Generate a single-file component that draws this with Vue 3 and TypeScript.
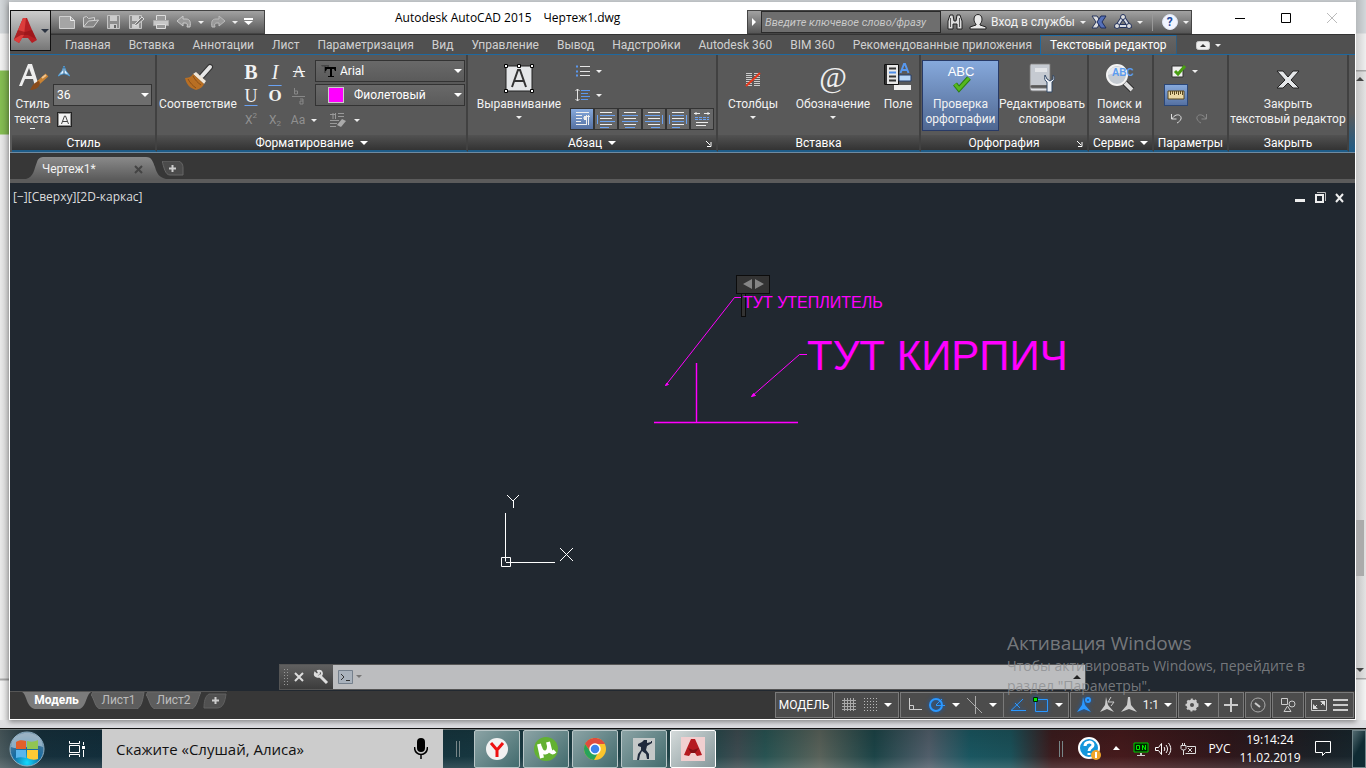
<script setup lang="ts">
import { ref } from 'vue'

const ribbonTabs: string[] = [
  'Главная', 'Вставка', 'Аннотации', 'Лист', 'Параметризация', 'Вид', 'Управление',
  'Вывод', 'Надстройки', 'Autodesk 360', 'BIM 360', 'Рекомендованные приложения', 'Текстовый редактор',
]
const activeTab = ref('Текстовый редактор')

interface ParagraphButton { label: string; white: string; blue: string }
const paragraphButtons: ParagraphButton[] = [
  { label: 'По умолчанию', white: 'M5 3.500h13M5 6.500h6M5 9.500h6M5 12.500h5M5 15.500h11M15.500 6v10M17.500 6v10M13 7.500h6M12.500 8.500h3M12.500 9.500h3M13 10.500h2', blue: '' },
  { label: 'По левому краю', white: 'M5 3.500h12M5 9.500h12M5 15.500h12', blue: 'M2.500 6v9M5 6.500h15M5 12.500h15M5 18.500h9' },
  { label: 'По центру', white: 'M5 3.500h12M5 9.500h12M5 15.500h12', blue: 'M3 6.500h16M3 12.500h16M6 18.500h10' },
  { label: 'По правому краю', white: 'M5 3.500h12M5 9.500h12M5 15.500h12', blue: 'M19.500 6v9M2 6.500h15M2 12.500h15M8 18.500h9' },
  { label: 'По ширине', white: 'M5 3.500h12M5 9.500h12M5 15.500h12', blue: 'M2.500 6v9M19.500 6v9M5 6.500h12M5 12.500h12M5 18.500h8' },
  { label: 'Распределить', white: 'M3 4.500h6M13 4.500h6M5 3v3M17 3v3M5 13.500h12M5 16.500h10', blue: 'M4 8.500h3M8 8.500h3M12 8.500h3M16 8.500h2M4 10.500h3M8 10.500h3M12 10.500h3M16 10.500h2' },
]

const textHeight = ref('36')
const font = ref('Arial')
const color = ref('Фиолетовый')
const command = ref('')
</script>

<template>
  <div class="screen">
    <div class="desk">
      <div class="strip left"></div>
      <main class="window">
        <header class="titlebar">
          <div class="qat">
            <button aria-label="Создать"><svg width="18" height="16"><path d="M1.500 2.500h11l4 4v8h-15z" fill="#a5a5a5" stroke="#d0d0d0" /><path d="M12.500 2.500v4h4" fill="none" stroke="#eee" /></svg></button>
            <button aria-label="Открыть"><svg width="18" height="16"><path d="M1.500 13V3.500l3-1 2 2 6-1v3M1.500 13l5-6 10-1-5 7z" fill="#888" stroke="#d0d0d0" /></svg></button>
            <button aria-label="Сохранить"><svg width="16" height="16"><path d="M1.500 1.500h12v13h-12z" fill="#8d8d8d" stroke="#c4c4c4" /><path d="M4 2h7v5H4zM4 10h7v4H4z" fill="#ccc" /><path d="M8 11h2v3H8z" fill="#666" /></svg></button>
            <button aria-label="Сохранить как"><svg width="18" height="16"><path d="M1.500 1.500h12v13h-12z" fill="#8d8d8d" stroke="#c4c4c4" /><path d="M4 2h7v5H4zM4 10h7v4H4z" fill="#ccc" /><path d="m7 10 7-7 2 2-7 6-3 1z" fill="#777" stroke="#ddd" /></svg></button>
            <button aria-label="Печать"><svg width="18" height="16"><path d="M4.500 1.500h9v5h-9z" fill="#999" stroke="#ddd" /><path d="M1.500 6.500h15v5h-15z" fill="#c8c8c8" stroke="#aaa" /><path d="M4.500 10.500h9v4h-9z" fill="#999" stroke="#ddd" /></svg></button>
            <button aria-label="Отменить"><svg width="16" height="16"><path d="m1 7 6-5v3h3c4 0 5 3 4 8h-3c1-3 0-4-2-4H7v3z" fill="#999" stroke="#c9c9c9" /></svg></button>
            <span class="tri"></span>
            <button aria-label="Вернуть"><svg width="16" height="16"><path d="m15 7-6-5v3H6C2 5 1 8 2 13h3c-1-3 0-4 2-4h2v3z" fill="#999" stroke="#bbb" /></svg></button>
            <span class="tri"></span>
            <button aria-label="Настройка панели"><svg width="10" height="8"><path d="M0 0h9v2H0zM0 3h9L4.500 7z" fill="#fff" /></svg></button>
          </div>
          <h1>Autodesk AutoCAD 2015<span>Чертеж1.dwg</span></h1>
          <div class="info">
            <button class="fold" aria-label="Свернуть"><svg width="5" height="8"><path d="m0 0 4 4-4 4z" fill="#fff" /></svg></button>
            <input type="text" aria-label="Поиск" placeholder="Введите ключевое слово/фразу" />
            <button aria-label="Найти"><svg width="18" height="18"><path d="M2 8 4 2h3l1 6h2l1-6h3l2 6v8h-5v-5H7v5H2z" fill="#ddd" stroke="#222" /><path d="M4.500 5v9M13.500 5v9" stroke="#555" /></svg></button>
            <button class="login"><svg width="18" height="18"><path d="M5 6c0-6 8-6 8 0 0 3-1 4-2 5v1l6 2v2H1v-2l6-2v-1C6 10 5 9 5 6z" fill="#e8e8e8" stroke="#222" /></svg>Вход в службы</button>
            <span class="tri"></span>
            <button aria-label="Exchange"><svg width="16" height="14"><path d="M1 1h5l2 3v6l-2 3H1l4-6z" fill="#ddd" stroke="#28365e" /><path d="M15 1h-5L6 7l4 6h5l-4-6z" fill="#5570b8" stroke="#1e2c5c" /></svg></button>
            <button class="net" aria-label="A360"><svg width="18" height="16"><path d="M9 3 3 12h12z" fill="none" stroke="#26345d" stroke-width="4" /><path d="M9 3 3 12h12z" fill="none" stroke="#d8dce6" stroke-width="2" /><circle cx="9" cy="3" r="2.500" fill="#ddd" stroke="#26345d" /><circle cx="3" cy="12" r="2.500" fill="#ddd" stroke="#26345d" /><circle cx="15" cy="12" r="2.500" fill="#ddd" stroke="#26345d" /></svg></button>
            <span class="tri"></span>
            <i class="bar"></i>
            <button class="help" aria-label="Справка"><b>?</b></button>
            <span class="tri"></span>
          </div>
          <div class="winctl">
            <button aria-label="Свернуть окно"><svg width="12" height="12"><path d="M1 6.500h10" stroke="#000" /></svg></button>
            <button aria-label="Развернуть окно"><svg width="12" height="12"><path d="M1.500 1.500h9v9h-9z" fill="none" stroke="#000" /></svg></button>
            <button aria-label="Закрыть окно"><svg width="12" height="12"><path d="m1 1 10 10M11 1 1 11" stroke="#bbb" /></svg></button>
          </div>
          <button class="appbtn" aria-label="Меню приложения">
            <svg width="26" height="28" viewBox="0 0 26 28"><path d="M11 1h4l5 12 5 10-5 3-4-5h-6l-3 5-5-3 4-10z" fill="#b51f24" /><path d="m11 1-5 12-4 10 5 3 5-8 2-17z" fill="#dc3d3b" /><path d="m6 13 7 2 7-2 4 9-8-4H9l-7 4z" fill="#941418" opacity=".7" /></svg>
            <span class="tri"></span>
          </button>
        </header>

        <nav class="tabs" role="tablist">
          <button v-for="t in ribbonTabs" :key="t" role="tab" :aria-selected="t === activeTab" :class="{ on: t === activeTab }" @click="activeTab = t">{{ t }}</button>
          <div class="ribbonmode"><svg width="14" height="9"><rect x=".5" y=".5" width="13" height="8" rx="2" fill="#eee" stroke="#ccc" /><path d="m4 6 3-3 3 3z" fill="#333" /></svg><span class="tri"></span></div>
        </nav>

        <section class="ribbon">
          <div class="panel p-style">
            <div class="body">
              <button class="big">
                <svg width="32" height="32" viewBox="0 0 32 32"><path fill="#eee" fill-rule="evenodd" d="M2 24 11 2h4l7 22h-4l-2-7H8l-3 7zM9 14h6l-3-8z" /><path d="m30 13-9 8" stroke="#c98232" stroke-width="4" /><path d="m29 13-4 3" stroke="#f1c48e" stroke-width="2" /><path d="M22 19c3 4-2 9-9 9 2-2 2-7 9-9z" fill="#8a4b1b" /></svg>
                <span>Стиль<br />текста</span><i class="dash"></i>
              </button>
              <div class="col">
                <button class="mini" aria-label="Аннотативный"><svg width="12" height="12"><path d="m6 1 2 5 4 5-4-2H4l-4 2 4-5z" fill="#e8f4ff" stroke="#4d9ad4" /><path d="M6 2v8" stroke="#225b88" /></svg></button>
                <div class="combo size"><input v-model="textHeight" type="text" aria-label="Высота текста" /><span class="tri big-t"></span></div>
                <button class="mask" aria-label="Маска фона"><svg width="13" height="13"><path d="M0 0h13v13H0z" fill="#f3f3f3" /><path d="M.5.5h12v12H.5z" fill="none" stroke="#333" stroke-dasharray="1 1" /><path d="m3.500 11 3-8h1l3 8M5 8.500h4" fill="none" stroke="#444" /></svg></button>
              </div>
            </div>
            <h2>Стиль</h2>
          </div>

          <div class="panel p-format">
            <div class="body">
              <button class="big">
                <svg width="32" height="32" viewBox="0 0 32 32"><path d="m28 5-8 9" stroke="#333" stroke-width="6" stroke-linecap="round" /><path d="m28 5-8 9" stroke="#e6e6e6" stroke-width="4" stroke-linecap="round" /><path d="m14 10 10 9-2 3L11 12z" fill="#f1e7d8" /><path d="M11 12c-2 3-5 4-8 4 1 5 4 10 11 12 4-1 7-3 8-6z" fill="#b86f24" /><path d="M6 17c2 4 5 7 8 9M11 14c2 4 5 7 8 9" stroke="#8a4f17" fill="none" /></svg>
                <span>Соответствие</span>
              </button>
              <div class="glyphs">
                <button class="serif"><b>B</b></button><button class="serif"><em>I</em></button><button class="serif strike">A</button>
                <button class="serif under">U</button><button class="serif over"><b>O</b></button><button class="dim serif" aria-label="Дробь"><svg width="16" height="18"><path d="M1 9.500h13" stroke="#888" /><path d="M3.500 1v6h3V4h-3M9 12h3v5H9v-3h3" fill="none" stroke="#888" /></svg></button>
                <button class="dim">X<sup>2</sup></button><button class="dim">X<sub>2</sub></button><button class="dim">Aa<span class="tri"></span></button>
              </div>
              <div class="col wide">
                <div class="combo"><svg class="ci" width="16" height="14"><path d="M0 1h8v3H7L6 2.500H5V9H3V2.500H1z" fill="#333" opacity=".6" /><path d="M4 3h11v4h-1l-1-2h-2v7h2v1H7v-1h2V5H6L5 7H4z" fill="#000" /></svg>
                  <select v-model="font" aria-label="Шрифт"><option>Arial</option></select><span class="tri big-t"></span></div>
                <div class="combo"><i class="swatch"></i><select v-model="color" class="colorsel" aria-label="Цвет"><option>Фиолетовый</option></select><span class="tri big-t"></span></div>
                <button class="eraser" aria-label="Удалить форматирование"><svg width="18" height="16"><path d="M4 1v6M6.500 1v6M1 2.500h6M9 1.500h6M9 4.500h6M1 8.500h9M1 11.500h7M1 14.500h6" stroke="#999" /><path d="m8 13 5-6 4 2-5 6z" fill="#aaa" /></svg><span class="tri"></span></button>
              </div>
            </div>
            <h2>Форматирование<span class="tri big-t"></span></h2>
          </div>

          <div class="panel p-para">
            <div class="body">
              <button class="big">
                <svg width="32" height="32" viewBox="0 0 32 32"><path d="M3 4h26v25H3z" fill="#e4e6e8" /><path d="M3 4h26v25H3z" fill="none" stroke="#222" /><path d="m9 25 6-17h2l6 17M11 19h10" fill="none" stroke="#333" stroke-width="2" /><g fill="#fff" stroke="#000"><path d="M1.500 2.500h3v3h-3zM14.500 2.500h3v3h-3zM27.500 2.500h3v3h-3zM1.500 27.500h3v3h-3zM27.500 27.500h3v3h-3z" /></g></svg>
                <span>Выравнивание</span><span class="tri"></span>
              </button>
              <div class="col">
                <button class="listbtn" aria-label="Маркеры и нумерация"><svg width="16" height="14"><path d="M5 2.500h10M5 7.500h10M5 11.500h10" stroke="#e5e5e5" /><path d="M1 1.500h2v2H1zM1 6.500h2v2H1zM1 10.500h2v2H1z" fill="#5b97ee" /></svg><span class="tri"></span></button>
                <button class="listbtn" aria-label="Межстрочный интервал"><svg width="16" height="14"><path d="M2.500 1v12M.5 3l2-2 2 2M.5 11l2 2 2-2" fill="none" stroke="#e5e5e5" /><path d="M6 2.500h9M6 5.500h7M6 8.500h9M6 11.500h7" stroke="#5b97ee" /></svg><span class="tri"></span></button>
                <div class="seg">
                  <button v-for="(b, i) in paragraphButtons" :key="b.label" :class="{ on: i === 0 }" :aria-label="b.label"><svg width="22" height="20"><path :d="b.white" stroke="#eee" /><path :d="b.blue" stroke="#6aa2f2" /></svg></button>
                </div>
              </div>
            </div>
            <h2>Абзац<span class="tri big-t"></span><svg class="launch" width="6" height="6"><path d="m0 0 4 4M5 1v4.500H1" fill="none" stroke="#fff" /></svg></h2>
          </div>

          <div class="panel p-insert">
            <div class="body">
              <button class="big w70"><svg width="32" height="32" viewBox="0 0 32 32"><path d="M9 11.500h6M9 13.500h6M9 15.500h6M9 17.500h6M9 19.500h6M9 21.500h6M9 23.500h6M17 11.500h6M17 13.500h6M17 15.500h6M17 17.500h6M17 19.500h6M17 21.500h6M17 23.500h6" stroke="#ccc" /><path d="m9 24 14-13" stroke="#e8381c" stroke-width="2" /></svg><span>Столбцы</span><span class="tri"></span></button>
              <button class="big w90"><i class="at">@</i><span>Обозначение</span><span class="tri"></span></button>
              <button class="big w40"><svg width="32" height="32" viewBox="0 0 32 32"><path d="M2.500 2.500h14v20h-14z" fill="#e8e8e8" stroke="#111" /><path d="M4 3v19" stroke="#333" stroke-width="2" /><path d="M7 6.500h7M7 14.500h7M7 18.500h7" stroke="#333" stroke-width="2" /><path d="M7 10.500h7" stroke="#4c8de8" stroke-width="2" /><path d="M18.500 11 22 2h1l3.500 9M20 8h5" fill="none" stroke="#5798ef" stroke-width="2" /><path d="M17 13h12v6H17z" fill="#b7d6f7" stroke="#263f6a" /><path d="M12 23h17v5H12z" fill="#eee" /></svg><span>Поле</span></button>
            </div>
            <h2>Вставка</h2>
          </div>

          <div class="panel p-spell">
            <div class="body">
              <button class="big spell on"><svg width="32" height="32" viewBox="0 0 32 32"><text x="16" y="14" text-anchor="middle" font-family="Liberation Sans, sans-serif" font-size="13" fill="#fff">ABC</text><path d="m10 22 4 5 10-11" fill="none" stroke="#2c7d10" stroke-width="5" /><path d="m10 22 4 5 10-11" fill="none" stroke="#56b81f" stroke-width="3" /></svg><span>Проверка<br />орфографии</span></button>
              <button class="big dict"><svg width="32" height="32" viewBox="0 0 32 32"><path d="M4 4c0-2 1-2 2-2h18v21H6c-2 0-2 3 0 3h18v3H7c-3 0-3-2-3-5z" fill="#dfe2e7" stroke="#777" /><path d="M5 3h18v20H5z" fill="#c5cad1" /><path d="M9 7h12M9 9h12" stroke="#fff" /><path d="M19 13c-1 4 0 6 2 7v10h5V20c3-2 3-5 1-7v4l-3 2-3-2z" fill="#edf1f6" stroke="#334865" /></svg><span>Редактировать<br />словари</span></button>
            </div>
            <h2>Орфография<svg class="launch" width="6" height="6"><path d="m0 0 4 4M5 1v4.500H1" fill="none" stroke="#fff" /></svg></h2>
          </div>

          <div class="panel p-tools">
            <div class="body">
              <button class="big"><svg width="32" height="32" viewBox="0 0 32 32"><path d="m21 21 7 7" stroke="#222" stroke-width="6" /><path d="m21 21 7 7" stroke="#ddd" stroke-width="4" /><circle cx="13" cy="13" r="10" fill="#c5cbd2" stroke="#f4f4f4" stroke-width="2" /><path d="M4 13c0-11 18-11 18 0-6-3-12-2-18 0z" fill="#e6e9ec" /><text x="8" y="14" font-family="Liberation Sans, sans-serif" font-weight="700" font-size="10" fill="#5b9cf0">ABC</text></svg><span>Поиск и<br />замена</span></button>
            </div>
            <h2>Сервис<span class="tri big-t"></span></h2>
          </div>

          <div class="panel p-opts">
            <div class="body opts">
              <button class="listbtn" aria-label="Дополнительно"><svg width="16" height="14"><path d="M1 2h11v11H1z" fill="#eee" stroke="#333" /><path d="m4 7 3 3 7-8" fill="none" stroke="#489d12" stroke-width="3" /></svg><span class="tri"></span></button>
              <button class="ruler" aria-label="Линейка"><svg width="18" height="10"><path d="M1 1h16v8H1z" fill="#ead8a5" stroke="#5b4820" /><path d="M3.500 1v4M5.500 1v3M7.500 1v4M9.500 1v3M11.500 1v4M13.500 1v3M15.500 1v4" stroke="#5b4820" /></svg></button>
              <div class="undo"><button aria-label="Отменить ввод"><svg width="13" height="11"><path d="M1.500 1v5h5M2 6c3-6 10-5 9 0-1 2-2 3-4 4" fill="none" stroke="#ddd" /></svg></button><button aria-label="Повторить ввод"><svg width="13" height="11"><path d="M11.500 1v5h-5M11 6C8 0 1 1 2 6c1 2 2 3 4 4" fill="none" stroke="#888" /></svg></button></div>
            </div>
            <h2>Параметры</h2>
          </div>

          <div class="panel p-close">
            <div class="body"><button class="big"><svg width="32" height="32" viewBox="0 0 32 32"><path d="M5 9h6l5 6 5-6h6l-8 9 8 8h-6l-5-5-5 5H5l8-8z" fill="#e5e7e9" stroke="#222" /></svg><span>Закрыть<br />текстовый редактор</span></button></div>
            <h2>Закрыть</h2>
          </div>
          <div class="rest"></div>
        </section>

        <div class="files">
          <div class="filetab">
            <svg class="shape" viewBox="0 0 140 22" preserveAspectRatio="none"><defs><linearGradient id="ft" x2="0" y2="1"><stop stop-color="#8a8a8a" /><stop offset="1" stop-color="#5c5c5c" /></linearGradient></defs><path d="M0 22C8 20 8 12 11 5 12 1 15 0 18 0h102c6 0 7 5 9 10 2 7 4 10 11 12z" fill="url(#ft)" /></svg>
            <button class="name">Чертеж1*</button><button class="x" aria-label="Закрыть чертеж"><svg width="9" height="9"><path d="m1 1 7 7M8 1 1 8" stroke="#444" stroke-width="2" /></svg></button>
          </div>
          <button class="plus" aria-label="Новый чертеж"><svg width="22" height="15"><path d="M0 0h15c4 0 6 3 6 7v7H8C3 14 2 6 0 0z" fill="#4b4b4b" stroke="#666" /><path d="M7 7.500h7M10.500 4v7" stroke="#ccc" stroke-width="2" /></svg></button>
        </div>

        <section class="canvas">
          <svg class="drawing" width="100%" height="100%">
            <g transform="translate(-10 -183)">
              <g stroke="#f0f" fill="none">
                <path d="M654 422.500h144" stroke="#8a0d8e" stroke-width="3" opacity=".6" /><path d="M654 422.500h144" />
                <path d="M696.500 363v59" stroke="#8a0d8e" stroke-width="2" /><path d="M696.500 363v59" />
                <path d="M741 297.500h-6.500l-69 88M807 354.500h-7.500l-48 42" />
                <path d="m665.500 385.500 3-1-1.500-1.500zM751.500 396.500l4-1-2-2z" fill="#f0f" />
              </g>
              <g fill="#333" stroke="#0c0c0c"><rect x="741.500" y="293.500" width="4" height="23" /><rect x="736.500" y="275.500" width="33" height="18" /></g>
              <path d="m752 279-9 5 9 5zM755 279l9 5-9 5z" fill="#858585" />
              <text x="743" y="308" font-size="16" fill="#f0f">ТУТ УТЕПЛИТЕЛЬ</text>
              <text x="807" y="370" font-size="42" fill="#f0f">ТУТ КИРПИЧ</text>
              <g stroke="#fff" fill="none"><path d="M505.500 513v48.500M506 562.500h49M501.500 557.500h9v9h-9zM507 495l6 6 6-6M513.500 501v7M560 548l13 13M573 548l-13 13" /></g>
            </g>
          </svg>
          <div class="viewctl"><button>[−]</button><button>[Сверху]</button><button>[2D-каркас]</button></div>
          <div class="docctl">
            <button aria-label="Свернуть чертеж"><svg width="12" height="12"><path d="M1 7h10v3H1z" fill="#eee" /></svg></button>
            <button aria-label="Восстановить чертеж"><svg width="12" height="12"><path d="M2 3h7v7H2z" fill="none" stroke="#eee" stroke-width="2" /><path d="M3 .5h8.500V9" fill="none" stroke="#bbb" /></svg></button>
            <button aria-label="Закрыть чертеж"><svg width="12" height="12"><path d="m2 2 7 8M9 2l-7 8" stroke="#eee" stroke-width="2" /></svg></button>
          </div>
          <div class="cmd">
            <div class="grip"></div>
            <button class="cx" aria-label="Закрыть строку"><svg width="12" height="12"><path d="m2 2 8 8M10 2l-8 8" stroke="#ddd" stroke-width="2" /></svg></button>
            <button aria-label="Параметры строки"><svg width="16" height="16"><path d="m6 6 8 8" stroke="#ddd" stroke-width="3" /><path d="M5 2c4-1 5 3 3 5-3 2-7 0-6-3l2 2 2-2z" fill="none" stroke="#ddd" stroke-width="2" /></svg></button>
            <div class="entry"><svg width="24" height="14"><path d="M.5.5h14v13H.5z" fill="#a9b2bc" stroke="#75808c" /><path d="m3 4 3 3-3 3M8 10.500h4" fill="none" stroke="#333" /><path d="M18 5h6l-3 3z" fill="#777" /></svg><input v-model="command" type="text" aria-label="Командная строка" /><svg width="9" height="6"><path d="m0 5 4-4 4 4z" fill="#222" /></svg></div>
          </div>
        </section>

        <footer class="status">
          <div class="layouts">
            <button class="lay on"><svg class="shape" viewBox="0 0 70 17" preserveAspectRatio="none"><path d="M0 0c5 2 4 15 13 17h45c7-1 7-14 12-17z" fill="#7b7b7b" /></svg><b>Модель</b></button>
            <button class="lay"><svg class="shape" viewBox="0 0 56 17" preserveAspectRatio="none"><path d="M0 3c3 2 4 14 10 14h36c6-1 7-12 8-17H2z" fill="#5d5d5d" stroke="#6a6a6a" /></svg><span>Лист1</span></button>
            <button class="lay"><svg class="shape" viewBox="0 0 56 17" preserveAspectRatio="none"><path d="M0 3c3 2 4 14 10 14h36c6-1 7-12 10-17H2z" fill="#5d5d5d" stroke="#6a6a6a" /></svg><span>Лист2</span></button>
            <button class="add" aria-label="Новый лист"><svg width="24" height="16"><path d="M6 1h17c-1 8-3 14-9 14H1C1 9 2 3 6 1z" fill="#505050" stroke="#606060" /><path d="M9 7.500h7M12.500 4v7" stroke="#ccc" stroke-width="2" /></svg></button>
          </div>
          <div class="tools">
            <div class="grp g1"><button>МОДЕЛЬ</button></div>
            <div class="grp g2">
              <button aria-label="Сетка"><svg width="16" height="16"><path d="M3.500 1v13M6.500 1v13M9.500 1v13M12.500 1v13M1 3.500h14M1 6.500h14M1 9.500h14M1 12.500h14" stroke="#aaa" /></svg></button>
              <button aria-label="Привязка"><svg width="16" height="16"><path d="M1 1.500h14M1 4.500h14M1 7.500h14M1 10.500h14M1 13.500h14" stroke="#bbb" stroke-dasharray="1 2" /></svg></button><span class="tri big-t"></span>
            </div>
            <div class="grp g3">
              <button aria-label="Орто"><svg width="16" height="16"><path d="M2.500 1v11.500H15M2.500 8.500h4v4" fill="none" stroke="#ccc" /></svg></button>
              <button aria-label="Полярное отслеживание"><svg class="glow" width="18" height="16"><circle cx="8" cy="8" r="6" fill="none" stroke="#2b98ff" stroke-width="2" /><path d="M8 8.500h9M8 8l6-6" stroke="#2b98ff" /></svg></button><span class="tri big-t"></span>
              <button aria-label="Изометрия"><svg width="18" height="18"><path d="m1 2 15 15M9.500 0v18" stroke="#aaa" /></svg></button><span class="tri big-t"></span>
            </div>
            <div class="grp g4">
              <button aria-label="Объектное отслеживание"><svg class="glow" width="18" height="16"><path d="m14 2-12 11.500h15M6 6l5 5" fill="none" stroke="#2b98ff" /></svg></button>
              <button aria-label="Объектная привязка"><svg class="glow" width="18" height="18"><path d="M3.500 3.500h12v12h-12z" fill="none" stroke="#2b98ff" /><path d="M1.500 1.500h4v4h-4z" fill="#0e0" stroke="#020" /></svg></button><span class="tri big-t"></span>
            </div>
            <div class="grp g5">
              <button aria-label="Видимость аннотаций"><svg class="glow" width="18" height="18"><path d="m8 1 2 8 6 7-7-3-7 3 5-7z" fill="#2b98ff" /><circle cx="13" cy="4" r="2" fill="none" stroke="#2b98ff" stroke-width="2" /></svg></button>
              <button aria-label="Автомасштаб"><svg width="18" height="18"><path d="m8 1 2 8 6 7-7-3-7 3 5-7z" fill="#ccc" /><path d="m13 1-3 5h6l-3 4" fill="none" stroke="#ccc" /></svg></button>
              <button aria-label="Аннотации"><svg width="18" height="18"><path d="M8 1h2l1 8 6 7-8-3-8 3 6-7z" fill="#ccc" /></svg></button>
              <button>1:1</button><span class="tri big-t"></span>
            </div>
            <div class="grp g6"><button aria-label="Рабочее пространство"><svg width="14" height="14"><circle cx="7" cy="7" r="5.500" fill="#ccc" stroke="#ccc" stroke-width="2" stroke-dasharray="2 2" /><circle cx="7" cy="7" r="2" fill="#505050" /></svg></button><span class="tri big-t"></span></div>
            <div class="grp g7 joined"><button aria-label="Монитор аннотаций"><svg width="14" height="14"><path d="M0 7h14M7 0v14" stroke="#ccc" stroke-width="2" /></svg></button></div>
            <div class="grp g7"><button aria-label="Производительность"><svg width="16" height="16"><circle cx="8" cy="8" r="7" fill="none" stroke="#aaa" /><path d="m5 6 5 4" stroke="#ccc" stroke-width="2" /></svg></button></div>
            <div class="grp g8"><button aria-label="Изоляция объектов"><svg width="16" height="16"><path d="M1.500 1.500h6v6h-6zM4 14.500h7L7.500 9z" fill="none" stroke="#ccc" /><circle cx="12" cy="7" r="3" fill="none" stroke="#ccc" /></svg></button></div>
            <div class="grp g9">
              <button aria-label="Чистый экран"><svg width="16" height="12"><path d="M.5.5h15v11H.5z" fill="none" stroke="#ccc" /><path d="M9 2h5v5zM2 5v5h5z" fill="#ddd" /><path d="m10 6 3-3M3 9l3-3" stroke="#ddd" /></svg></button>
              <button aria-label="Адаптация"><svg width="15" height="12"><path d="M0 1h15M0 6h15M0 11h15" stroke="#ccc" stroke-width="2" /></svg></button>
            </div>
          </div>
        </footer>
      </main>
      <div class="strip right"><svg width="9" height="5" class="up"><path d="m0 4 4-4 4 4z" fill="#444" /></svg><i class="thumb"></i><svg width="9" height="5" class="down"><path d="m0 0 4 4 4-4z" fill="#444" /></svg></div>
    </div>

    <aside class="activate"><strong>Активация Windows</strong><p>Чтобы активировать Windows, перейдите в<br />раздел "Параметры".</p></aside>

    <div class="taskbar">
      <button class="start" aria-label="Пуск"><svg width="36" height="36" viewBox="0 0 36 36"><defs><radialGradient id="orb" cx=".5" cy=".9" r=".8"><stop stop-color="#12dbff" /><stop offset=".5" stop-color="#146ba2" /><stop offset="1" stop-color="#5a7d98" /></radialGradient></defs><circle cx="18" cy="18" r="17" fill="url(#orb)" stroke="#8fb0c4" /><path d="M2 16C3-3 33-3 34 16 24 12 12 20 2 16z" fill="#d9e8ef" opacity=".5" /><path d="M7 11c3-2 6-2 10-1v8H7z" fill="#e2602b" /><path d="M18 10c4 1 7 1 11-1v9H18z" fill="#91c553" /><path d="M7 19h10v8c-4-1-7-1-10 0z" fill="#5ab6ed" /><path d="M18 19h11v9c-3 1-7 1-11-1z" fill="#ffca35" /></svg></button>
      <button class="taskview" aria-label="Представление задач"><svg width="18" height="16"><path d="M1.500 4.500h10v7h-10zM1.500 0v2.500h10V0M1.500 16v-2.500h10V16M15.500 1v3M15.500 9v7" fill="none" stroke="#fff" /><path d="M14 5h3v3h-3z" fill="#fff" /></svg></button>
      <label class="search"><input type="text" aria-label="Поиск Алиса" placeholder="Скажите «Слушай, Алиса»" /><svg width="14" height="22"><rect x="3" y="0" width="8" height="14" rx="4" /><path d="M.5 9c0 10 13 10 13 0M7 17v4" fill="none" stroke="#000" stroke-width="1.500" /></svg></label>
      <i class="sep"></i>
      <div class="apps">
        <button aria-label="Yandex"><svg width="24" height="24"><circle cx="12" cy="12" r="11" fill="#f1f1f1" /><path d="m6 6 6 7 6-7M12 13v7" fill="none" stroke="#e11" stroke-width="3" /></svg></button>
        <button aria-label="uTorrent"><svg width="26" height="26"><circle cx="13" cy="13" r="12" fill="#63b132" /><path d="m9 22-3-14M7 11c2 8 9 7 9-1M15 6l2 8c1 3 3 3 5 1" fill="none" stroke="#fff" stroke-width="4" /></svg></button>
        <button aria-label="Chrome"><svg width="24" height="24"><circle cx="12" cy="12" r="11" fill="#fbc52c" /><path d="M2 7C6-1 18-1 22 7H12l-5 7z" fill="#df4c3e" /><path d="M2 7c-3 7 1 15 9 16l5-9H7z" fill="#27a35a" /><circle cx="12" cy="12" r="5" fill="#3d83ed" stroke="#fff" stroke-width="1.500" /></svg></button>
        <button aria-label="Counter-Strike"><svg width="24" height="24"><path d="M1 1h22v22H1z" fill="#c4c8c8" /><path d="m12 3 3 0 0 3 4-1 0-1 1 0 0 2-5 3-1 4 3 4 0 5h-2l-1-5-4-3-2 4-1 5H5l1-6 3-4 0-3-3-1 0-2 4-2z" fill="#202a3c" /></svg></button>
        <button class="on" aria-label="AutoCAD"><svg width="26" height="26"><path d="M1 1h24v24H1z" fill="#f1cfd0" /><path d="M11 3h4l4 9 3 7-5 1-2-3h-4l-2 3-5-1 3-7z" fill="#b51a20" /><path d="m8 12 5 2 6-2-4 5h-4z" fill="#831016" /></svg></button>
      </div>
      <div class="fill"></div>
      <i class="sep"></i>
      <div class="tray">
        <button class="assist" aria-label="Справка Windows"><svg width="24" height="24"><circle cx="11" cy="11" r="10" fill="#1396db" stroke="#fff" stroke-width="2" /><path d="M7 9c0-5 8-5 8-1 0 3-4 2-4 6M11 16v2" fill="none" stroke="#fff" stroke-width="3" /><circle cx="18" cy="18" r="5" fill="#f0a52a" /><path d="M18 15v6" stroke="#fff" stroke-width="2" /></svg></button>
        <button class="hidden" aria-label="Скрытые значки"><svg width="9" height="5"><path d="m1 4 3-4 4 4z" fill="#fff" /></svg></button>
        <button class="led" aria-label="Индикатор"><svg width="16" height="16"><path d="M1 2h14v9H1z" fill="#020" stroke="#0c0" /><path d="M3.500 4.500h3v4h-3zM9.500 9V4l3 5V4" fill="none" stroke="#0e0" /><path d="M7 12h2v2h3v1H4v-1h3z" fill="#ccc" /></svg></button>
        <button aria-label="Громкость"><svg width="18" height="14"><path d="M1.500 5.500h3l3-4v11l-3-4h-3zM10 5c1 1 1 3 0 4M12 3c2 3 2 5 0 8M14.500 1c3 4 3 8 0 12" fill="none" stroke="#fff" /></svg></button>
        <button aria-label="Питание"><svg width="18" height="14"><path d="M1 3.500h5v3c0 2-5 2-5 0zM2.500 1v2M4.500 1v2M3.500 8v5M7 4.500h8.500v7H5.500M8 6l4 4M12 6l-4 4" fill="none" stroke="#ddd" /></svg></button>
        <button class="lang">РУС</button>
        <button class="clock"><span>19:14:24</span><span>11.02.2019</span></button>
        <button class="note" aria-label="Уведомления"><svg width="18" height="17"><path d="M1.500 1.500h15v11h-5l-3 3v-3h-7z" fill="none" stroke="#fff" /></svg></button>
        <button class="peek" aria-label="Показать рабочий стол"></button>
      </div>
    </div>
  </div>
</template>

<style>
body { overflow: hidden; }
</style>

<style scoped>
.screen { height: 100vh; display: flex; flex-direction: column; font: 12px/15px "Open Sans", "Noto Sans", sans-serif; color: #f2f2f2; position: relative; }
.screen * { box-sizing: border-box; }
button { background: none; border: 0; padding: 0; margin: 0; color: inherit; font: inherit; display: flex; align-items: center; justify-content: center; white-space: nowrap; }
input, select { font: inherit; color: inherit; border: 0; padding: 0; background: none; outline: 0; min-width: 0; appearance: none; }
svg { display: block; flex: none; }
i { font-style: normal; }
.tri { width: 0; height: 0; flex: none; border: solid transparent; border-width: 3px 3px 0; border-top-color: #eee; }
.tri.big-t { border-width: 4px 4px 0; border-top-color: #fff; }

.desk { flex: 1; min-height: 0; display: flex; padding: 2px 0 8px; background: linear-gradient(#c9cdd0 0 2px, #d6d8da 34px, #d9d9d9 80px, #e8e8e8 700px, #dcdce0 100%); }
.strip.left { width: 9px; margin-top: -2px; background: linear-gradient(to right, transparent, #0002), linear-gradient(#d3d7da 0 33px, #f2f2f2 34px 70px, #85bd52 71px 134px, #e9e9e9 135px 678px, #aaa 679px 680px, #f4f4f4 681px); }
.strip.right { width: 10px; margin-top: -2px; display: flex; flex-direction: column; align-items: flex-start; background: linear-gradient(to left, transparent, #0002), linear-gradient(#d3d7da 0 33px, #efefef 34px 70px, #aaa 70px 71px, #e3e3e3 72px 678px, #aaa 678px 679px, #f4f4f4 680px); }
.up { margin-top: 77px; }
.thumb { width: 8px; height: 56px; margin-top: 438px; background: #ababab; }
.down { margin-top: 92px; }

.window { font-family: Roboto, "Open Sans", sans-serif; flex: 1; min-width: 0; display: flex; flex-direction: column; background: #fff; border: 1px solid #fff; border-top: 0; box-shadow: 0 2px 5px #0006; }
.titlebar { height: 32px; display: flex; position: relative; align-items: flex-end; }
.appbtn { position: absolute; left: 0; top: 8px; width: 41px; height: 41px; border: 1px solid #111; background: linear-gradient(#ccc, #777); z-index: 2; gap: 3px; }
.appbtn .tri { border-width: 4px 4px 0; border-top-color: #2c3442; }
.qat { width: 214px; height: 24px; margin-left: 41px; padding-left: 7px; display: flex; align-items: center; gap: 6px; background: linear-gradient(#a2a2a2, #575757); border: 1px solid #444; border-left: 0; }
h1 { flex: 1; margin: 0; padding-left: 130px; font: 12px/32px "Open Sans", "Noto Sans", sans-serif; height: 32px; color: #000; white-space: nowrap; min-width: 0; }
h1 span { margin-left: 12px; }
.info { width: 445px; height: 24px; display: flex; align-items: center; background: linear-gradient(#a2a2a2, #565656); border: 1px solid #444; gap: 5px; }
.fold { width: 13px; margin-right: -5px; }
.info input { width: 180px; height: 22px; border: 1px solid #2b2b2b; background: #6e6e6e; font-style: italic; font-size: 11px; padding-left: 3px; }
.info input::placeholder { color: #c9c9c9; opacity: 1; }
.login { gap: 4px; }
.net { margin-left: 2px; }
.bar { width: 1px; height: 18px; background: #999; margin: 0 4px; }
.help { width: 16px; height: 16px; border-radius: 8px; background: #f0f4ff; border: 1px solid #dfe5f2; color: #234a9c; }
.winctl { width: 163px; height: 32px; display: flex; justify-content: flex-end; align-items: center; }
.winctl button { width: 46px; height: 30px; }

.tabs { height: 21px; background: #505050; border-top: 1px solid #333; border-bottom: 1px solid #1e69a0; display: flex; padding: 1px 0 0 46px; }
.tabs button { padding: 0 9px; color: #d0d0d0; height: 18px; }
.tabs .on { color: #fff; background: linear-gradient(#656565, #5a5a5a); box-shadow: 0 0 0 1px #1e69a0; clip-path: inset(-1px -1px 0); }
.ribbonmode { display: flex; align-items: center; gap: 5px; margin-left: 20px; }

.ribbon { height: 98px; display: flex; padding: 0 0 0 2px; background: #595959; border-bottom: 1px solid #6f8aa0; }
.panel { display: flex; flex-direction: column; border-right: 2px solid #414141; border-bottom: 2px solid #1e5c88; }
.body { flex: 1; display: flex; padding-top: 5px; min-height: 0; }
h2 { height: 15px; margin: 0; padding-top: 1px; display: flex; align-items: center; justify-content: center; gap: 6px; font-size: 12px; font-weight: 400; background: linear-gradient(#525252, #333); position: relative; white-space: nowrap; color: #fff; }
.launch { position: absolute; right: 4px; bottom: 3px; }
.p-style { width: 145px; } .p-format { width: 311px; } .p-para { width: 250px; } .p-insert { width: 203px; }
.p-spell { width: 168px; } .p-tools { width: 65px; } .p-opts { width: 75px; } .p-close { width: 120px; }
.rest { flex: 1; background: linear-gradient(#595959 60%, #1e5c88); }
.big { flex-direction: column; justify-content: flex-start; height: 74px; flex: none; padding-top: 2px; }
.big > svg, .at { height: 32px; margin-bottom: 3px; }
.big > span:not(.tri) { text-align: center; }
.big > .tri { margin-top: 4px; }
.dash { width: 5px; height: 1px; background: #eee; margin-top: 1px; }
.p-style .big { width: 41px; } .p-format .big { width: 82px; } .p-para .big { width: 102px; } .p-tools .big { width: 61px; } .p-close .big { width: 118px; }
.w70 { width: 70px; } .w90 { width: 90px; } .w40 { width: 40px; }
.at { font: 30px/30px "Liberation Serif", serif; color: #eee; }
.spell { width: 77px; height: 71px; border: 1px solid #283a66; background: linear-gradient(#86a9dc, #4f6791); padding-top: 1px; margin-left: 1px; }
.dict { width: 86px; }
.col { display: flex; flex-direction: column; gap: 2px; }
.wide { width: 150px; }
.mini { width: 22px; height: 22px; }
.combo { height: 22px; border: 1px solid #333; background: linear-gradient(#696969, #5b5b5b); display: flex; align-items: center; padding-right: 2px; color: #fff; }
.combo.size { width: 99px; background: #6e6e6e; }
.combo input, .combo select { flex: 1; width: 0; padding-left: 3px; }
.combo .colorsel { padding-left: 10px; }
.ci { margin-left: 5px; }
.swatch { width: 16px; height: 16px; margin-left: 12px; background: #f0f; border: 1px solid #ccc; }
.mask { width: 15px; height: 15px; margin: 4px 0 0 4px; border: 1px solid #222; }
.glyphs { display: grid; grid-template-columns: repeat(3, 24px); grid-auto-rows: 24px; width: 76px; }
.serif { font: 20px/22px "Liberation Serif", serif; }
.strike { font-size: 17px; text-decoration: line-through; }
.under { font-size: 18px; text-decoration: underline #6aa2f2; text-underline-offset: 3px; }
.over { font-size: 17px; text-decoration: overline #6aa2f2; }
.dim { color: #909090; position: relative; }
sup, sub { font-size: 8px; line-height: 8px; }
sup { margin-bottom: 8px; } sub { margin-top: 8px; }
.dim .tri { margin-left: 6px; margin-right: -10px; }
.eraser { width: 42px; height: 24px; margin-left: 14px; gap: 7px; justify-content: flex-start; }
.listbtn { height: 22px; width: 36px; gap: 5px; }
.seg { display: flex; }
.seg button { width: 24px; height: 22px; border: 1px solid #333; background: #666; }
.seg .on, .ruler { background: linear-gradient(#86a9dc, #5571a2); }
.opts { flex-direction: column; gap: 2px; padding-left: 10px; }
.opts .listbtn { margin-left: 5px; width: 30px; }
.ruler { width: 24px; height: 22px; border: 1px solid #2b4778; }
.undo { display: flex; gap: 12px; margin: 5px 0 0 6px; }

.files { height: 30px; padding: 4px 0 0 16px; display: flex; background: #373737; border-bottom: 4px solid #5b5b5b; }
.filetab { width: 140px; height: 22px; position: relative; display: flex; align-items: center; justify-content: space-between; padding: 2px 23px 0 16px; }
.shape { position: absolute; inset: 0; width: 100%; height: 100%; }
.name, .x { position: relative; }
.plus { margin: 4px 0 0 -4px; height: 15px; }

.canvas { flex: 1; min-height: 0; position: relative; background: #212830; overflow: hidden; }
.drawing { position: absolute; inset: 0; font-family: "Liberation Sans", Arial, sans-serif; }
.viewctl { position: absolute; left: 3px; top: 6px; display: flex; color: #ddd; font-family: "Open Sans", "Noto Sans", sans-serif; }
.docctl { position: absolute; right: 9px; top: 9px; display: flex; gap: 8px; }
.cmd { position: absolute; left: 269px; bottom: 1px; width: 60%; height: 26px; display: flex; background: linear-gradient(#606060, #3c3c3c); border: 1px solid #555; align-items: center; gap: 8px; }
.grip { width: 6px; height: 18px; margin-left: 3px; background: radial-gradient(#999 1px, transparent 1px) 0 0 / 3px 3px; }
.cx { margin-left: -4px; }
.entry { flex: 1; align-self: stretch; background: #bcbdbf; display: flex; align-items: center; padding: 0 3px 0 5px; margin-left: -4px; }
.entry input { flex: 1; color: #222; }

.status { height: 28px; background: #373737; display: flex; justify-content: space-between; }
.layouts { display: flex; padding-left: 12px; color: #bbb; border-top: 1px solid #555; height: 18px; }
.lay { position: relative; width: 55px; height: 17px; }
.lay.on { width: 69px; color: #fff; }
.lay b, .lay span { position: relative; }
.add { height: 17px; margin-left: 2px; }
.tools { display: flex; gap: 1px; padding: 1px 1px 0 0; }
.grp { height: 26px; display: flex; align-items: center; justify-content: space-evenly; background: #4c4c4c; border: 1px solid #7a7a7a; }
.g1 { width: 58px; color: #fff; } .g2 { width: 65px; } .g3 { width: 104px; } .g4 { width: 66px; margin-left: -2px; } .g5 { width: 107px; } .g6 { width: 41px; } .g7 { width: 26px; } .g8 { width: 32px; } .g9 { width: 49px; }
.joined { margin-left: -2px; }
.glow { filter: drop-shadow(0 0 2px #0a5ec4); }

.activate { position: absolute; right: 57px; bottom: 72px; width: 302px; color: #8c8e91cc; pointer-events: none; white-space: nowrap; }
.activate strong { font-weight: 400; font-size: 19px; line-height: 26px; display: block; }
.activate p { margin: 0; font-size: 14px; line-height: 20px; }

.taskbar { height: 40px; display: flex; align-items: center; border-top: 1px solid #111; box-shadow: inset 0 1px #6b7678; background: linear-gradient(#0002, #0000 70%, #fff2), linear-gradient(90deg, #4b5b5f 0, #16303c 3%, #122e3b 8%, #16363f 34%, #24484b 52%, #3d4b50 54%, #285352 56%, #59625a 60%, #1c4447 64%, #515e6a 68%, #1a5660 71%, #1b5159 74%, #3c1c1e 77%, #451a1c 82%, #2f171b 90%, #1c2026 96%, #17272e 100%); }
.start { width: 36px; height: 36px; margin-left: 9px; }
.taskview { width: 57px; height: 39px; padding-left: 7px; }
.search { width: 341px; height: 39px; background: #ccc; display: flex; align-items: center; padding: 0 15px 0 14px; }
.search input { flex: 1; font-size: 15px; }
.search input::placeholder { color: #111; opacity: 1; }
.sep { width: 4px; height: 16px; border: solid #788688; border-width: 0 1px; margin-left: 13px; }
.apps { display: flex; gap: 3px; margin-left: 14px; }
.apps button { width: 46px; height: 38px; border: 1px solid #b8c6c7; border-radius: 2px; background: linear-gradient(135deg, #8ba3a5, #436c6e); }
.apps .on { background: linear-gradient(135deg, #d4dada, #86989b); border-color: #fff; }
.fill { flex: 1; }
.tray { display: flex; align-items: center; height: 39px; color: #fff; padding-left: 17px; }
.tray button { height: 39px; width: 26px; }
.tray .assist { width: 20px; }
.tray .hidden { width: 32px; }
.tray .led { width: 18px; }
.tray .lang { width: 35px; }
.tray .clock { flex-direction: column; width: 66px; line-height: 18px; }
.tray .note { width: 40px; }
.tray .peek { width: 14px; height: 38px; border: 1px solid #71858a; background: linear-gradient(120deg, #526a70, #0f2b33 50%); margin-left: 9px; }
</style>
